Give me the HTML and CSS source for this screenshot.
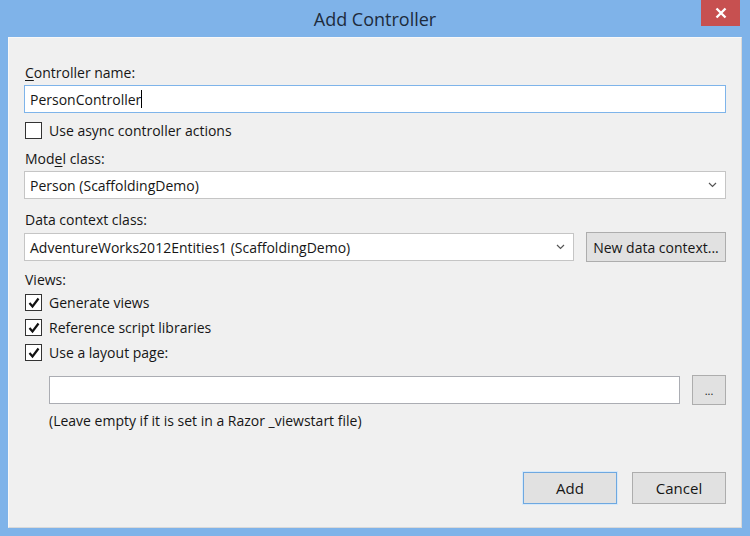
FILE: index.html
```html
<!DOCTYPE html>
<html lang="en">

<head>
    <meta charset="UTF-8">
    <title>Add Controller</title>
    <link rel="stylesheet" href="styles.css">
</head>

<body>
    <div class="window">
        <div class="titlebar">
            <span class="title">Add Controller</span>
            <button class="close" aria-label="Close">
                <svg width="12" height="12" viewBox="0 0 12 12">
                    <path d="M1.5 1.5 L10.5 10.5 M10.5 1.5 L1.5 10.5" stroke="#fff" stroke-width="2.4" fill="none" />
                </svg>
            </button>
        </div>
        <div class="client">
            <div class="field">
                <label><u>C</u>ontroller name:</label>
                <div class="textbox focused">PersonController<span class="caret"></span></div>
            </div>
            <div class="check first-check">
                <span class="box"></span>
                <span>Use async controller actions</span>
            </div>

            <div class="field">
                <label>Mod<u>e</u>l class:</label>
                <div class="select">
                    <span>Person (ScaffoldingDemo)</span>
                    <svg class="chevron" width="9" height="6" viewBox="0 0 9 6">
                        <path d="M1 1 L4.5 4.5 L8 1" stroke="#555" stroke-width="1.2" fill="none" />
                    </svg>
                </div>
            </div>

            <div class="field">
                <label>Data context class:</label>
                <div class="row">
                    <div class="select grow">
                        <span>AdventureWorks2012Entities1 (ScaffoldingDemo)</span>
                        <svg class="chevron" width="9" height="6" viewBox="0 0 9 6">
                            <path d="M1 1 L4.5 4.5 L8 1" stroke="#555" stroke-width="1.2" fill="none" />
                        </svg>
                    </div>
                    <button class="btn new-context">New data context...</button>
                </div>
            </div>

            <div class="views">
                <label>Views:</label>
                <div class="check">
                    <span class="box checked"><svg width="14" height="14" viewBox="0 0 14 14"><path d="M2.5 7 L5.5 10.5 L11.5 2.5" stroke="#111" stroke-width="2.2" fill="none" /></svg></span>
                    <span>Generate views</span>
                </div>
                <div class="check">
                    <span class="box checked"><svg width="14" height="14" viewBox="0 0 14 14"><path d="M2.5 7 L5.5 10.5 L11.5 2.5" stroke="#111" stroke-width="2.2" fill="none" /></svg></span>
                    <span>Reference script libraries</span>
                </div>
                <div class="check">
                    <span class="box checked"><svg width="14" height="14" viewBox="0 0 14 14"><path d="M2.5 7 L5.5 10.5 L11.5 2.5" stroke="#111" stroke-width="2.2" fill="none" /></svg></span>
                    <span>Use a layout page:</span>
                </div>
                <div class="layout-row">
                    <div class="textbox grow"></div>
                    <button class="btn browse">...</button>
                </div>
                <div class="hint">(Leave empty if it is set in a Razor _viewstart file)</div>
            </div>

            <div class="actions">
                <button class="btn action default">Add</button>
                <button class="btn action">Cancel</button>
            </div>
        </div>
    </div>
</body>

</html>
```

FILE: styles.css
```css
body {
    margin: 0;
    padding: 0;
    background-color: #7fb3e9;
    font-family: "Open Sans", "Noto Sans", sans-serif;
    font-size: 14px;
    color: #161616;
}

.window {
    width: 750px;
    height: 536px;
    display: flex;
    flex-direction: column;
    background-color: #7fb3e9;
}

.titlebar {
    height: 37px;
    position: relative;
    display: flex;
    justify-content: center;
    align-items: center;
}

.title {
    font-size: 18px;
    color: #1d2b3c;
}

.close {
    position: absolute;
    top: 0;
    right: 10px;
    width: 39px;
    height: 26px;
    background-color: #c75050;
    border: none;
    padding: 0;
    display: flex;
    justify-content: center;
    align-items: center;
}

.client {
    margin: 0 8px 8px 8px;
    flex: 1;
    background-color: #f0f0f0;
    border-top: 1px solid #f8f8f8;
    border-left: 1px solid #f8f8f8;
    border-right: 1px solid #d9d9d9;
    border-bottom: 1px solid #d9d9d9;
    padding: 25px 15px 0 15px;
    display: flex;
    flex-direction: column;
}

label {
    display: block;
    line-height: 20px;
    margin-left: 1px;
}

u {
    text-decoration-thickness: 1px;
    text-underline-offset: 2px;
}

.field label {
    margin-bottom: 2px;
}

.textbox,
.select {
    height: 26px;
    background: white;
    border: 1px solid #abadb3;
    display: flex;
    align-items: center;
    padding: 0 5px;
    box-sizing: content-box;
}

.textbox.focused {
    border-color: #7eb4ea;
}

.caret {
    display: inline-block;
    width: 1px;
    height: 18px;
    background: #000;
}

.select {
    justify-content: space-between;
    border-color: #c5c5c5;
}

.chevron {
    margin-right: 3px;
}

.row {
    display: flex;
    align-items: center;
    gap: 12px;
}

.grow {
    flex: 1;
}

.check {
    display: flex;
    align-items: center;
    gap: 7px;
    height: 25px;
    margin-left: 1px;
}

.first-check {
    margin-top: -6px;
    margin-bottom: 6px;
}

.box {
    width: 15px;
    height: 15px;
    border: 1px solid #333;
    background: white;
    display: flex;
    justify-content: center;
    align-items: center;
}

.field {
    margin-bottom: 11px;
}

.btn {
    font-family: inherit;
    font-size: 14px;
    color: #161616;
    background-color: #e1e1e1;
    border: 1px solid #adadad;
    padding: 0;
}

.new-context {
    width: 140px;
    height: 30px;
}

.views {
    margin-top: -3px;
}

.layout-row {
    display: flex;
    gap: 12px;
    margin: 10px 0 0 25px;
    align-items: center;
}

.browse {
    width: 34px;
    height: 30px;
    font-size: 11px;
}

.hint {
    margin: 6px 0 0 25px;
    line-height: 20px;
}

.actions {
    display: flex;
    justify-content: flex-end;
    gap: 15px;
    margin-top: 41px;
}

.action {
    width: 94px;
    height: 32px;
    font-size: 15px;
}

.default {
    border-color: #6ea8e0;
    box-shadow: 0 0 0 1px #d6e9fa;
}
```
